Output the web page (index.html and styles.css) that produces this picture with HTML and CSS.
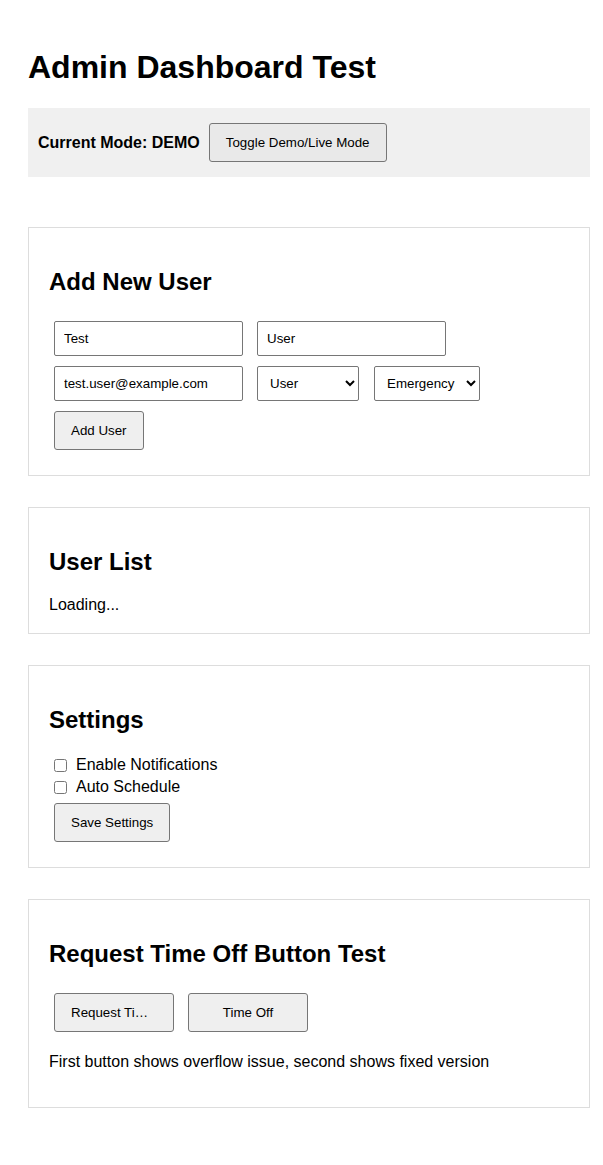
FILE: index.html
```html
<!DOCTYPE html>
<html>
<head>
<meta charset="utf-8">
<title>Admin Dashboard Test</title>
<link rel="stylesheet" href="styles.css">
</head>
<body>
<div class="page">
  <h1 class="title">Admin Dashboard Test</h1>
  <div class="mode-bar">
    <span class="mode-label">Current Mode: DEMO</span>
    <button class="btn btn-toggle">Toggle Demo/Live Mode</button>
  </div>

  <section class="card">
    <h2 class="card-title">Add New User</h2>
    <div class="form-row">
      <input class="field field-text" type="text" value="Test">
      <input class="field field-text" type="text" value="User">
    </div>
    <div class="form-row">
      <input class="field field-text" type="email" value="test.user@example.com">
      <select class="field field-select field-role"><option>User</option></select>
      <select class="field field-select field-type"><option>Emergency</option></select>
    </div>
    <div class="form-row">
      <button class="btn">Add User</button>
    </div>
  </section>

  <section class="card">
    <h2 class="card-title">User List</h2>
    <div class="loading">Loading...</div>
  </section>

  <section class="card">
    <h2 class="card-title">Settings</h2>
    <label class="check"><input type="checkbox" class="check-box"> Enable Notifications</label>
    <label class="check"><input type="checkbox" class="check-box"> Auto Schedule</label>
    <button class="btn">Save Settings</button>
  </section>

  <section class="card">
    <h2 class="card-title">Request Time Off Button Test</h2>
    <div class="btn-row">
      <button class="btn btn-fixed btn-overflow">Request Time Off</button>
      <button class="btn btn-fixed btn-center">Time Off</button>
    </div>
    <p class="note">First button shows overflow issue, second shows fixed version</p>
  </section>
</div>
</body>
</html>
```

FILE: styles.css
```css
html, body {
  margin: 0;
  padding: 0;
  background: #ffffff;
}

body {
  font-family: "Liberation Sans", Arial, sans-serif;
  color: #000;
  font-size: 16px;
}

.page {
  width: 562px;
  padding: 28px 0 28px 28px;
}

.title {
  font-size: 32px;
  line-height: 37px;
  font-weight: bold;
  margin: 21px 0 22px 0;
}

.mode-bar {
  display: flex;
  align-items: center;
  gap: 9px;
  background: #f0f0f0;
  padding: 15px 10px;
  margin-bottom: 50px;
}

.mode-label {
  font-weight: bold;
  font-size: 16px;
}

.btn {
  font-family: "Liberation Sans", Arial, sans-serif;
  font-size: 13.33px;
  line-height: 15px;
  padding: 11px 16px;
  margin: 5px;
  border: 1px solid #767676;
  border-radius: 3px;
  background: #efefef;
  color: #000;
  box-sizing: border-box;
  height: 39px;
}

.btn-toggle {
  margin: 0;
  background: #e9e9e9;
}

.card {
  border: 1px solid #dddddd;
  padding: 20px;
  margin-bottom: 31px;
}

.card-title {
  font-size: 24px;
  line-height: 28px;
  font-weight: bold;
  margin: 20px 0;
}

.form-row {
  display: flex;
  align-items: center;
  gap: 4px;
}

.field {
  font-family: "Liberation Sans", Arial, sans-serif;
  font-size: 13.33px;
  margin: 5px;
  border: 1px solid #767676;
  border-radius: 2px;
  box-sizing: border-box;
  height: 35px;
  color: #000;
  background: #fff;
}

.field-text {
  width: 189px;
  padding: 9px;
}

.field-select {
  padding: 0 4px 0 8px;
}

.field-role {
  width: 102px;
}

.field-type {
  width: 106px;
  margin-left: 6px;
}

.loading {
  font-size: 16px;
  line-height: 17px;
}

.check {
  display: flex;
  align-items: center;
  height: 22px;
  font-size: 16px;
}

.check-box {
  width: 13px;
  height: 13px;
  margin: 0 9px 0 5px;
}

.btn-row {
  display: flex;
  gap: 4px;
}

.btn-fixed {
  width: 120px;
  white-space: nowrap;
  overflow: hidden;
  text-overflow: ellipsis;
}

.btn-overflow {
  text-align: left;
}

.btn-center {
  text-align: center;
}

.note {
  margin: 16px 0;
  line-height: 18px;
}
```
